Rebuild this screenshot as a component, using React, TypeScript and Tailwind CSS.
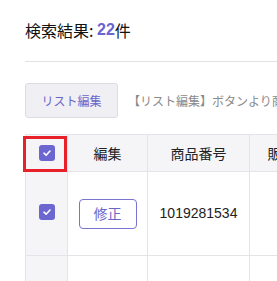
const jp = "font-['Noto_Sans_CJK_JP','Liberation_Sans',sans-serif]";

function Check() {
  return (
    <span className="flex h-4 w-4 items-center justify-center rounded-[3px] bg-[#6c66d0]">
      <svg width="10" height="10" viewBox="0 0 10 10" fill="none">
        <path d="M2 5.2L4.1 7.2L8 3" stroke="white" strokeWidth="1.6" strokeLinecap="round" strokeLinejoin="round" />
      </svg>
    </span>
  );
}

export default function App() {
  return (
    <div className={`h-[281px] w-[277px] overflow-hidden bg-white pl-[25px] ${jp}`}>
      <div className="flex h-[62px] w-[400px] items-center border-b border-[#e2e2e6] pb-[2px] text-[16px] leading-none text-[#111]">
        <span className="whitespace-pre">{"検索結果: "}</span>
        <span className="font-['Liberation_Sans',sans-serif] font-bold text-[#6b63d0]">22</span>
        <span>件</span>
      </div>

      <div className="mt-[21px] flex w-[500px] items-center gap-[10px]">
        <button className="h-[35px] w-[93px] shrink-0 rounded-[3px] border border-[#dcdce2] bg-[#f0f0f4] text-[12px] text-[#6c66c9]">
          リスト編集
        </button>
        <span className="whitespace-nowrap text-[12px] text-[#8a8a8a]">
          【リスト編集】ボタンより商品情報を編集できます
        </span>
      </div>

      <div className="mt-[16px] w-[420px] border-l border-t border-[#e3e3e8] text-[14px] text-[#222]">
        <div className="flex h-[37px] border-b border-[#e3e3e8] bg-[#f5f5f8]">
          <div className="relative flex w-[42px] items-center justify-center border-r border-[#e3e3e8]">
            <Check />
            <div className="absolute -left-[3px] top-px h-[36px] w-[44px] border-[3px] border-[#e8202a]" />
          </div>
          <div className="flex w-[80px] items-center justify-center border-r border-[#e3e3e8]">編集</div>
          <div className="flex w-[102px] items-center justify-center border-r border-[#e3e3e8]">商品番号</div>
          <div className="flex w-[92px] items-center justify-center border-r border-[#e3e3e8]">販売価格</div>
        </div>

        <div className="flex h-[84px] border-b border-[#e3e3e8]">
          <div className="flex w-[42px] items-center justify-center border-r border-[#e3e3e8] bg-[#f5f5f8] pb-[3px]">
            <Check />
          </div>
          <div className="flex w-[80px] items-center justify-center border-r border-[#e3e3e8]">
            <button className="h-[30px] w-[58px] rounded-[4px] border border-[#7a74d0] text-[14px] text-[#6c66c9]">
              修正
            </button>
          </div>
          <div className="flex w-[102px] items-center justify-center border-r border-[#e3e3e8] font-['Liberation_Sans',sans-serif]">
            1019281534
          </div>
          <div className="w-[92px] border-r border-[#e3e3e8]" />
        </div>

        <div className="flex h-[40px]">
          <div className="w-[42px] border-r border-[#e3e3e8] bg-[#f5f5f8]" />
          <div className="w-[80px] border-r border-[#e3e3e8]" />
          <div className="w-[102px] border-r border-[#e3e3e8]" />
          <div className="w-[92px] border-r border-[#e3e3e8]" />
        </div>
      </div>
    </div>
  );
}
